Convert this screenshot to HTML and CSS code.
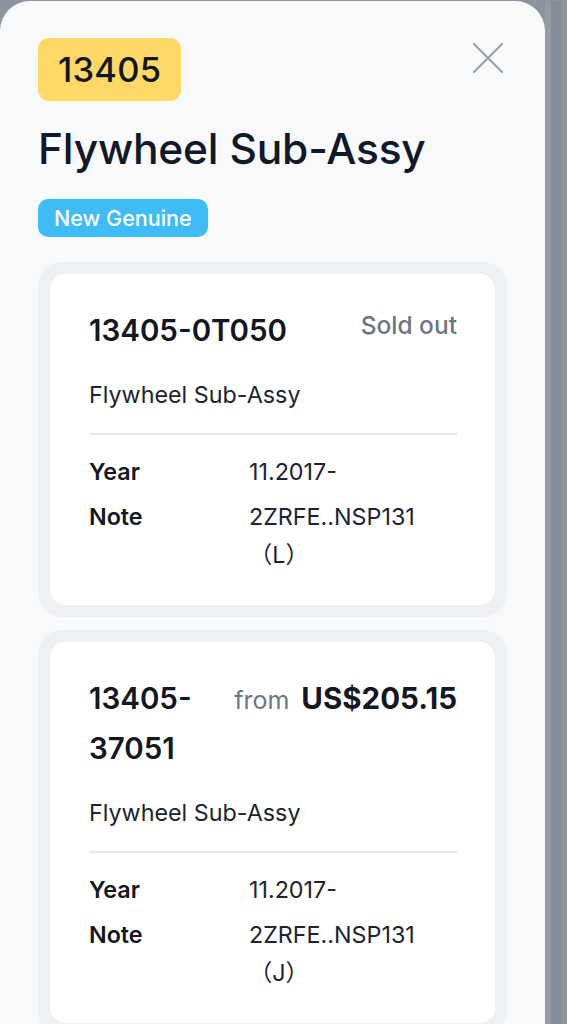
FILE: index.html
```html
<!DOCTYPE html>
<html lang="en">
<head>
<meta charset="utf-8">
<title>Flywheel Sub-Assy</title>
<link rel="stylesheet" href="styles.css">
</head>
<body>
<div class="screen">
  <main class="panel">
    <header class="head">
      <div class="head-top">
        <span class="code-badge">13405</span>
        <button class="close" aria-label="Close">
          <svg width="32" height="32" viewBox="0 0 32 32"><path d="M2 2 L30 30 M30 2 L2 30" stroke="#98a1ac" stroke-width="2.2" stroke-linecap="round" fill="none"/></svg>
        </button>
      </div>
      <h1 class="title">Flywheel Sub-Assy</h1>
      <span class="tag">New Genuine</span>
    </header>

    <section class="card-wrap">
      <article class="card">
        <div class="card-head">
          <h2 class="part-no">13405-0T050</h2>
          <span class="sold">Sold out</span>
        </div>
        <p class="part-name">Flywheel Sub-Assy</p>
        <dl class="specs">
          <dt>Year</dt><dd>11.2017-</dd>
          <dt>Note</dt><dd>2ZRFE..NSP131（L）</dd>
        </dl>
      </article>
    </section>

    <section class="card-wrap">
      <article class="card">
        <div class="card-head">
          <h2 class="part-no">13405-37051</h2>
          <span class="price"><span class="from">from</span> US$205.15</span>
        </div>
        <p class="part-name">Flywheel Sub-Assy</p>
        <dl class="specs">
          <dt>Year</dt><dd>11.2017-</dd>
          <dt>Note</dt><dd>2ZRFE..NSP131（J）</dd>
        </dl>
      </article>
    </section>
  </main>
  <div class="edge"></div>
</div>
</body>
</html>
```

FILE: styles.css
```css
* { box-sizing: border-box; }
html, body {
  margin: 0;
  height: 1024px;
  overflow: hidden;
  background: #8d939c;
}
body {
  font-family: "Inter", "Noto Sans CJK JP", sans-serif;
  color: #111827;
}
.screen {
  display: flex;
  height: 1024px;
  padding-top: 1px;
}
.panel {
  width: 545px;
  flex: 0 0 545px;
  background: #f8f9fb;
  border-radius: 30px 30px 0 0;
  padding: 37px 38px 0 38px;
  display: flex;
  flex-direction: column;
  gap: 13px;
  overflow: hidden;
}
.edge {
  flex: 1;
  background: linear-gradient(to right, #959aa3 0 6px, #848c98 6px 16px, #8e939c 16px);
}
.head {
  display: flex;
  flex-direction: column;
  align-items: flex-start;
  margin-bottom: 12px;
}
.head-top {
  align-self: stretch;
  display: flex;
  justify-content: space-between;
  align-items: flex-start;
}
.code-badge {
  background: #ffd866;
  border-radius: 11px;
  height: 63px;
  padding: 0 20px 0 20px;
  display: flex;
  align-items: center;
  font-size: 34.5px;
  font-weight: 500;
  color: #131722;
  letter-spacing: 0.2px;
}
.close {
  border: 0;
  background: none;
  padding: 0;
  margin: 4px 3px 0 0;
  width: 32px;
  height: 32px;
  cursor: pointer;
}
.close svg { display: block; }
.title {
  margin: 22px 0 0 0;
  font-size: 42.5px;
  line-height: 52px;
  font-weight: 500;
  color: #111827;
  letter-spacing: -0.2px;
}
.tag {
  margin-top: 24px;
  background: #3fbcf6;
  color: #fff;
  border-radius: 10px;
  height: 38px;
  padding: 0 16px;
  display: flex;
  align-items: center;
  font-size: 21.5px;
  font-weight: 500;
}
.card-wrap {
  background: #eef1f4;
  border-radius: 24px;
  padding: 12px;
}
.card {
  background: #fff;
  border-radius: 16px;
  padding: 31px 38px 31px 39px;
}
.card-head {
  display: flex;
  justify-content: space-between;
  align-items: flex-start;
  gap: 40px;
}
.part-no {
  margin: 0;
  font-size: 29.5px;
  line-height: 50px;
  font-weight: 600;
  color: #131722;
  min-width: 0;
}
.sold {
  flex-shrink: 0;
  font-size: 24.5px;
  font-weight: 500;
  color: #6b7683;
  line-height: 40px;
}
.price {
  flex-shrink: 0;
  font-size: 29.5px;
  line-height: 50px;
  font-weight: 700;
  color: #131722;
  white-space: nowrap;
}
.from {
  font-size: 25px;
  font-weight: 400;
  color: #6b7683;
  margin-right: 5px;
}
.part-name {
  margin: 25px 0 0 0;
  font-size: 23.3px;
  line-height: 30px;
  color: #1d2330;
  padding-bottom: 23px;
  border-bottom: 2px solid #e5e8ec;
}
.specs {
  margin: 18px 0 0 0;
  display: grid;
  grid-template-columns: 160px 1fr;
  row-gap: 7px;
  font-size: 23.3px;
  line-height: 38px;
}
.specs dt {
  font-weight: 600;
  color: #131722;
}
.specs dd {
  margin: 0;
  color: #1d2330;
}
```
